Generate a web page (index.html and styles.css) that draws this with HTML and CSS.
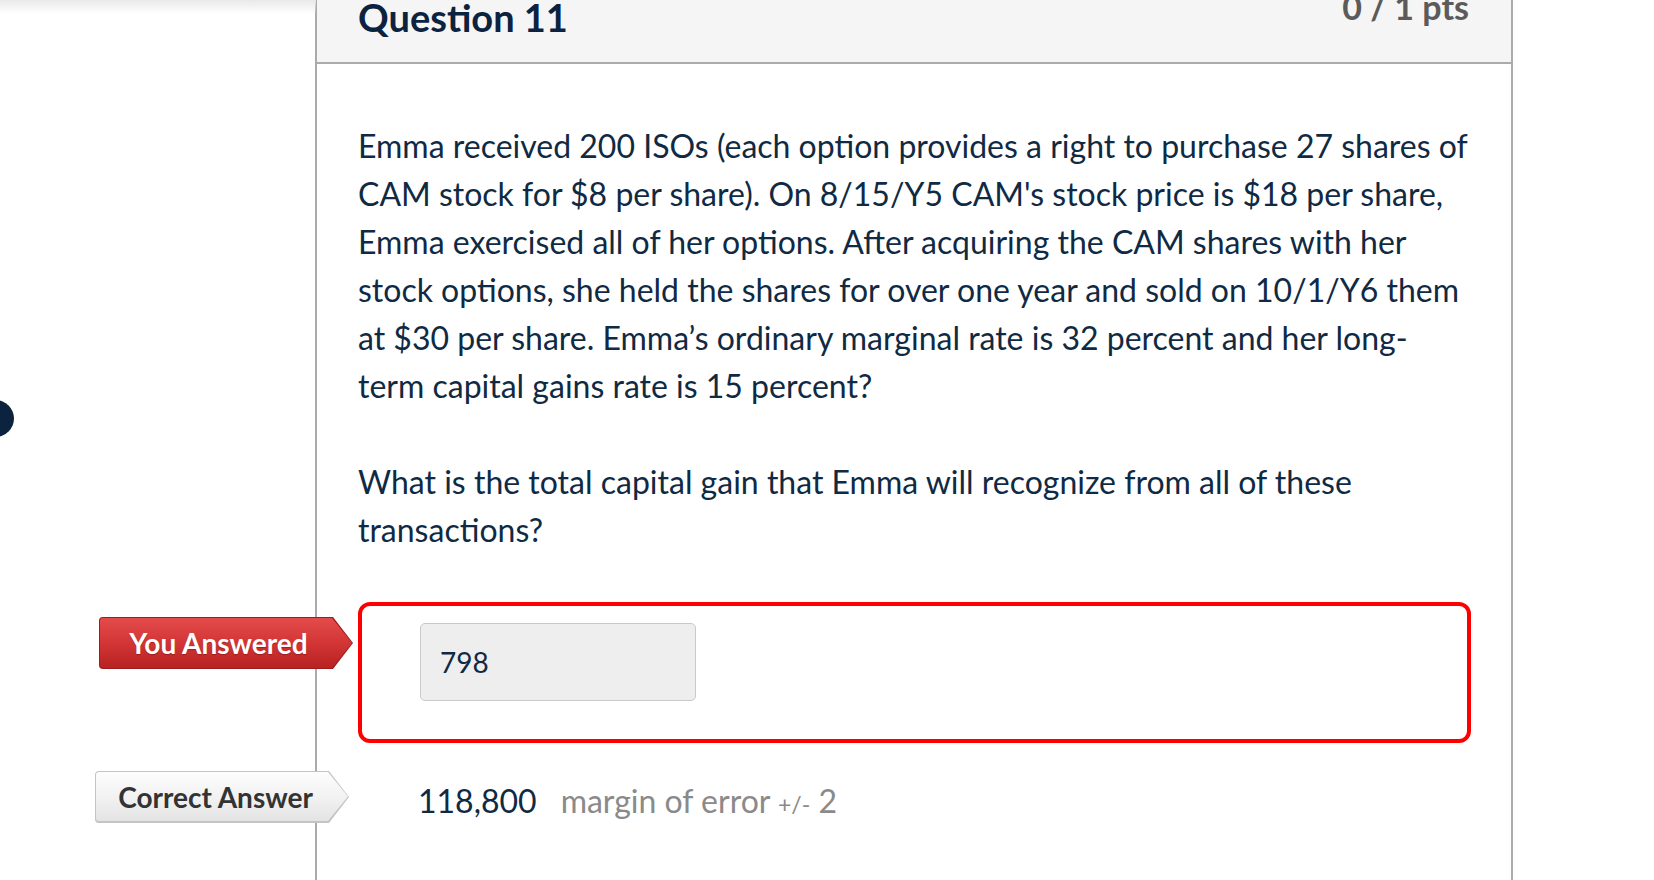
FILE: index.html
```html
<!DOCTYPE html>
<html lang="en">
<head>
<meta charset="utf-8">
<title>Question 11</title>
<link rel="stylesheet" href="styles.css">
</head>
<body>
<div class="page">
  <div class="shade"></div>
  <div class="nav-dot"></div>
  <div class="question">
    <div class="q-header">
      <h2 class="q-name">Question 11</h2>
      <span class="q-points">0 / 1 pts</span>
    </div>
    <div class="q-body">
      <p class="q-text">Emma received 200 ISOs (each option provides a right to purchase 27 shares of CAM stock for $8 per share). On 8/15/Y5 CAM's stock price is $18 per share, Emma exercised all of her options. After acquiring the CAM shares with her stock options, she held the shares for over one year and sold on 10/1/Y6 them at $30 per share. Emma’s ordinary marginal rate is 32 percent and her long-term capital gains rate is 15 percent?</p>
      <p class="q-text">What is the total capital gain that Emma will recognize from all of these transactions?</p>

      <div class="answer answer-wrong">
        <div class="arrow arrow-red"><span class="arrow-inner">You Answered</span></div>
        <div class="answer-input">798</div>
      </div>

      <div class="answer answer-correct">
        <div class="arrow arrow-grey"><span class="arrow-inner">Correct Answer</span></div>
        <span class="answer-value">118,800</span>
        <span class="answer-margin">margin of error <span class="pm">+/-</span> 2</span>
      </div>
    </div>
  </div>
</div>
</body>
</html>
```
FILE: styles.css
```css
html, body {
  margin: 0;
  padding: 0;
  background: #ffffff;
  overflow: hidden;
}

body {
  font-family: Lato, "Noto Sans", sans-serif;
  color: #102a43;
}

.page {
  position: relative;
  width: 1654px;
  height: 880px;
  overflow: hidden;
}

.shade {
  position: absolute;
  left: 0;
  top: 0;
  width: 316px;
  height: 14px;
  background: linear-gradient(to bottom, #e9e9e9 0%, rgba(255, 255, 255, 0) 100%);
}

.nav-dot {
  position: absolute;
  left: -23px;
  top: 400px;
  width: 37px;
  height: 37px;
  border-radius: 50%;
  background: #0c2340;
}

.question {
  margin-left: 315px;
  width: 1194px;
  min-height: 880px;
  border-left: 2px solid #ababab;
  border-right: 2px solid #ababab;
}

.q-header {
  height: 62px;
  background: #f5f5f5;
  border-bottom: 2px solid #ababab;
  padding: 0 42px 0 41px;
  display: flex;
  justify-content: space-between;
  align-items: flex-start;
  overflow: hidden;
}

.q-name {
  margin: -5px 0 0;
  font-size: 38px;
  line-height: 1.2;
  font-weight: 700;
  color: #0c2340;
}

.q-points {
  margin-top: -13px;
  font-size: 34px;
  line-height: 1.2;
  font-weight: 700;
  color: #5b5b5b;
}

.q-body {
  padding: 58px 40px 0 41px;
}

.q-text {
  margin: 0 0 48px;
  font-size: 32px;
  line-height: 48px;
}

.answer {
  position: relative;
}

.answer-wrong {
  border: 4px solid #ff0000;
  border-radius: 12px;
  padding: 17px 58px 38px;
  height: 78px;
}

.answer-input {
  width: 276px;
  height: 78px;
  box-sizing: border-box;
  border: 1.5px solid #c9c9c9;
  border-radius: 5px;
  background: #eeeeee;
  padding-left: 19px;
  display: flex;
  align-items: center;
  font-size: 28px;
  color: #102a43;
}

.answer-correct {
  margin-top: 28px;
  height: 52px;
  padding-left: 60px;
  padding-top: 3px;
  display: flex;
  align-items: center;
  gap: 24px;
}

.arrow {
  position: absolute;
  width: 254px;
  height: 52px;
  clip-path: polygon(0 0, calc(100% - 20px) 0, 100% 50%, calc(100% - 20px) 100%, 0 100%);
  border-radius: 4px 0 0 4px;
  display: flex;
}

.arrow-inner {
  flex: 1;
  margin: 1px;
  padding-right: 15px;
  clip-path: polygon(0 0, calc(100% - 20px) 0, 100% 50%, calc(100% - 20px) 100%, 0 100%);
  border-radius: 3px 0 0 3px;
  display: flex;
  align-items: center;
  justify-content: center;
  font-size: 28px;
  font-weight: 700;
}

.arrow-red {
  left: -263px;
  top: 11px;
  background: #9e1c1c;
}

.arrow-red .arrow-inner {
  background: linear-gradient(to bottom, #e44b4b 0%, #d33535 50%, #b72222 100%);
  color: #ffffff;
  text-shadow: 0 1px 1px rgba(90, 0, 0, 0.4);
}

.arrow-grey {
  left: -263px;
  top: 0;
  background: #c4c4c4;
}

.arrow-grey .arrow-inner {
  margin-bottom: 2px;
  padding-right: 13px;
  background: linear-gradient(to bottom, #fdfdfd 0%, #f1f1f1 55%, #e3e3e3 100%);
  color: #333333;
}

.answer-value {
  font-size: 32px;
  color: #102a43;
}

.answer-margin {
  font-size: 32px;
  color: #8a8a8a;
}

.answer-margin .pm {
  font-size: 23px;
}
```
